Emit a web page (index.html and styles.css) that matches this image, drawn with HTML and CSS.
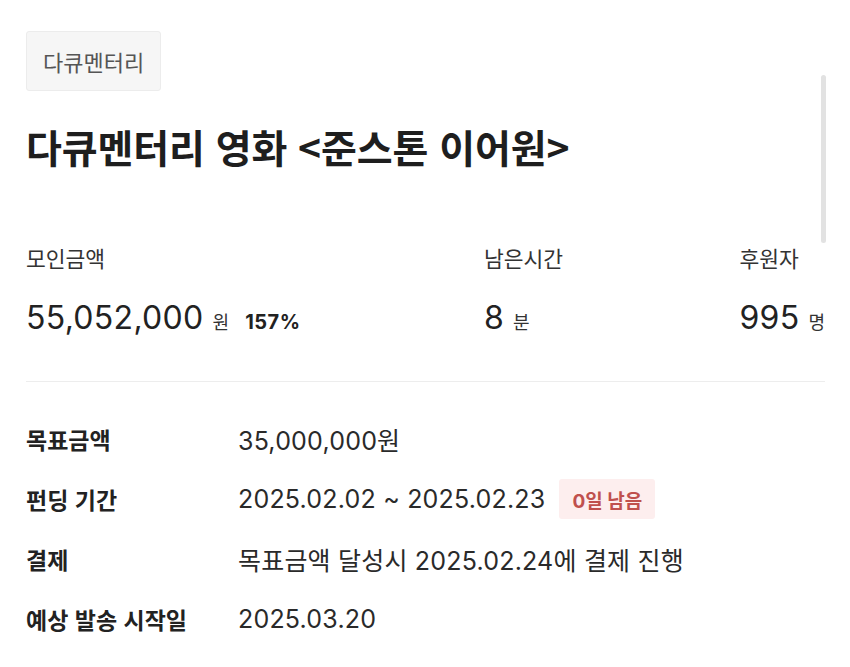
FILE: index.html
```html
<!DOCTYPE html>
<html lang="ko">
<head>
<meta charset="utf-8">
<link rel="stylesheet" href="styles.css">
</head>
<body>
<div class="page">
  <div class="tag">다큐멘터리</div>
  <h1 class="title">다큐멘터리 영화 &lt;준스톤 이어원&gt;</h1>
  <div class="stats">
    <div class="stat">
      <div class="stat-label">모인금액</div>
      <div class="stat-value"><span class="num">55,052,000</span><span class="unit">원</span><span class="pct">157%</span></div>
    </div>
    <div class="stat stat-time">
      <div class="stat-label">남은시간</div>
      <div class="stat-value"><span class="num">8</span><span class="unit">분</span></div>
    </div>
    <div class="stat stat-backers">
      <div class="stat-label">후원자</div>
      <div class="stat-value"><span class="num">995</span><span class="unit">명</span></div>
    </div>
  </div>
  <div class="divider"></div>
  <div class="info">
    <div class="row"><div class="key">목표금액</div><div class="val">35,000,000원</div></div>
    <div class="row"><div class="key">펀딩 기간</div><div class="val">2025.02.02 ~ 2025.02.23 <span class="badge">0일 남음</span></div></div>
    <div class="row"><div class="key">결제</div><div class="val">목표금액 달성시 2025.02.24에 결제 진행</div></div>
    <div class="row"><div class="key">예상 발송 시작일</div><div class="val">2025.03.20</div></div>
  </div>
  <div class="scroll-thumb"></div>
</div>
</body>
</html>
```
FILE: styles.css
```css
* { box-sizing: border-box; }
html, body { margin: 0; padding: 0; background: #fff; }
body {
  font-family: Inter, "Noto Sans CJK KR", sans-serif;
  color: #222;
}
.page {
  position: relative;
  width: 850px;
  height: 667px;
  overflow: hidden;
  padding: 31px 25px 0 26px;
}
.tag {
  display: inline-flex;
  align-items: center;
  height: 60px;
  padding: 0 16px;
  background: #f6f6f6;
  border: 1px solid #ececec;
  border-radius: 3px;
  font-family: "Noto Sans CJK KR", sans-serif;
  font-size: 22px;
  color: #555;
}
.title {
  margin: 30px 0 0;
  font-family: "Noto Sans CJK KR", sans-serif;
  font-size: 39px;
  line-height: 50px;
  font-weight: 700;
  color: #1e1e1e;
  letter-spacing: -0.1px;
}
.stats {
  display: flex;
  margin-top: 72px;
}
.stat { flex: 0 0 auto; }
.stat:first-child { width: 458px; }
.stat-time { flex: 1; }
.stat-backers { display: flex; flex-direction: column; align-items: flex-start; }
.stat-label {
  font-family: "Noto Sans CJK KR", sans-serif;
  font-size: 21.5px;
  line-height: 30px;
  color: #333;
}
.stat-value {
  display: flex;
  align-items: baseline;
  margin-top: 23px;
  line-height: 44px;
}
.num {
  font-family: Inter, sans-serif;
  font-size: 32px;
  color: #222;
  letter-spacing: 0.3px;
}
.unit {
  font-family: "Noto Sans CJK KR", sans-serif;
  font-size: 18px;
  color: #333;
  margin-left: 9px;
}
.pct {
  font-family: Inter, sans-serif;
  font-size: 20px;
  font-weight: 700;
  color: #222;
  margin-left: 16px;
  letter-spacing: 0.5px;
}
.divider {
  height: 1px;
  background: #ededed;
  margin-top: 37px;
}
.info {
  display: flex;
  flex-direction: column;
  margin-top: 37px;
  gap: 20px;
}
.row {
  display: flex;
  align-items: center;
  min-height: 40px;
}
.key {
  width: 212px;
  font-family: "Noto Sans CJK KR", sans-serif;
  font-size: 23px;
  font-weight: 700;
  color: #222;
}
.val {
  display: flex;
  align-items: center;
  font-size: 25px;
  color: #2a2a2a;
  letter-spacing: 0.2px;
}
.badge {
  display: inline-flex;
  align-items: center;
  height: 40px;
  padding: 0 13px;
  margin-left: 14px;
  background: #fdeeee;
  border-radius: 3px;
  font-family: Inter, "Noto Sans CJK KR", sans-serif;
  font-size: 19px;
  font-weight: 700;
  color: #c0504d;
  letter-spacing: 0;
}
.scroll-thumb {
  position: absolute;
  left: 821px;
  top: 75px;
  width: 5px;
  height: 168px;
  border-radius: 3px;
  background: #e2e2e2;
}
```
